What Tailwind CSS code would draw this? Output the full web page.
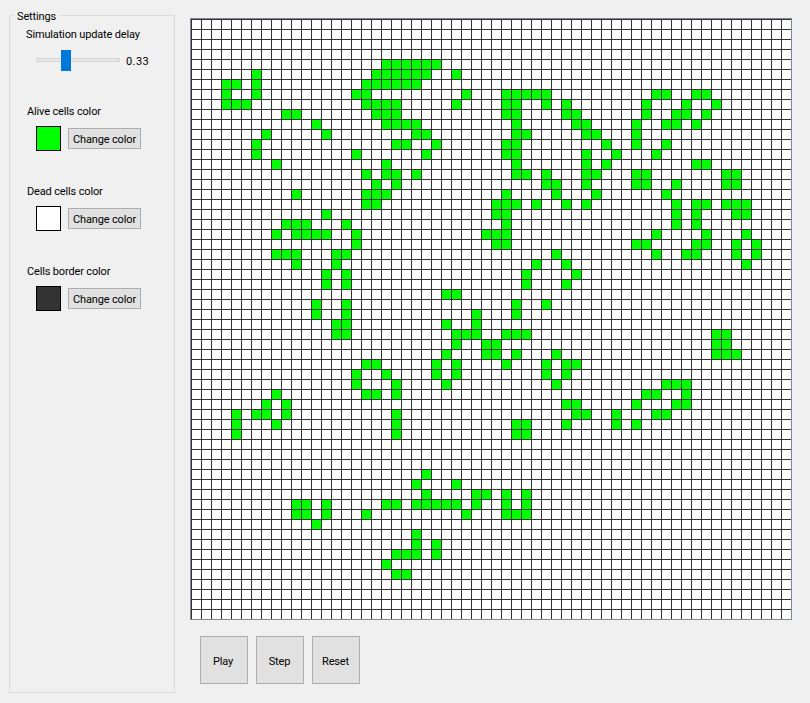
<!DOCTYPE html>
<html>
<head>
<meta charset="utf-8">
<title>Game of Life</title>
<script src="https://cdn.jsdelivr.net/npm/@tailwindcss/browser@4"></script>
</head>
<body class="m-0">
<div class="flex w-[810px] h-[703px] overflow-hidden bg-[#f0f0f0] text-[11px] tracking-[-0.15px] leading-[18px] text-[#000] font-['Roboto',sans-serif]">
  <!-- Settings group -->
  <div class="relative ml-[9px] mt-[15px] w-[166px] h-[678px] shrink-0 border border-[#dcdcdc] pl-[16px] pt-[10px]">
    <span class="absolute left-[3px] top-[-8px] bg-[#f0f0f0] px-[4px]">Settings</span>
    <div>Simulation update delay</div>
    <div class="flex items-center mt-[5px] ml-[10px] h-[21px]">
      <div class="relative w-[84px] h-[4px] bg-[#e7e7e7] border border-[#d6d6d6]">
        <div class="absolute left-[24px] top-[-9px] w-[10px] h-[21px] bg-[#0078d7]"></div>
      </div>
      <span class="ml-[6px] mt-[5px] tracking-[0.4px]">0.33</span>
    </div>

    <div class="mt-[33px] ml-[1px]">Alive cells color</div>
    <div class="flex items-center mt-[5px] ml-[10px] gap-[7px]">
      <div class="w-[25px] h-[25px] bg-[#00ff00] border border-black"></div>
      <button class="w-[73px] h-[21px] bg-[#e1e1e1] border border-[#adadad] pt-[2px] whitespace-nowrap">Change color</button>
    </div>

    <div class="mt-[32px] ml-[1px]">Dead cells color</div>
    <div class="flex items-center mt-[5px] ml-[10px] gap-[7px]">
      <div class="w-[25px] h-[25px] bg-white border border-black"></div>
      <button class="w-[73px] h-[21px] bg-[#e1e1e1] border border-[#adadad] pt-[2px] whitespace-nowrap">Change color</button>
    </div>

    <div class="mt-[32px] ml-[1px]">Cells border color</div>
    <div class="flex items-center mt-[5px] ml-[10px] gap-[7px]">
      <div class="w-[25px] h-[25px] bg-[#333333] border border-black"></div>
      <button class="w-[73px] h-[21px] bg-[#e1e1e1] border border-[#adadad] pt-[2px] whitespace-nowrap">Change color</button>
    </div>
  </div>

  <!-- Board and controls -->
  <div class="ml-[15px] mt-[18px] flex flex-col">
    <div class="w-[602px] h-[602px] border border-[#7f8a94] bg-white">
      <svg class="block" width="600" height="600" viewBox="0 0 600 600" shape-rendering="crispEdges">
        <defs>
          <pattern id="cells" width="10" height="10" patternUnits="userSpaceOnUse">
            <path d="M0 .5H10M.5 0V10" fill="none" stroke="#333333" stroke-width="1"/>
          </pattern>
        </defs>
        <g transform="scale(10)">
          <path fill="none" stroke="#00ff00" stroke-width="1" d="
            M19 4.5h6
            M6 5.5h1M18 5.5h6M26 5.5h1
            M3 6.5h2M6 6.5h1M17 6.5h6
            M3 7.5h1M6 7.5h1M16 7.5h2M27 7.5h1M31 7.5h5M46 7.5h2M50 7.5h2
            M3 8.5h3M17 8.5h4M26 8.5h1M31 8.5h2M35 8.5h1M37 8.5h1M45 8.5h1M49 8.5h1M52 8.5h1
            M9 9.5h2M18 9.5h3M31 9.5h2M37 9.5h2M45 9.5h1M48 9.5h2M51 9.5h1
            M12 10.5h1M19 10.5h4M32 10.5h1M38 10.5h2M44 10.5h1M47 10.5h2M50 10.5h1
            M7 11.5h1M13 11.5h1M22 11.5h2M32 11.5h2M39 11.5h2M44 11.5h1
            M6 12.5h1M20 12.5h2M24 12.5h1M31 12.5h2M41 12.5h1M44 12.5h1M47 12.5h1
            M6 13.5h1M16 13.5h1M23 13.5h1M31 13.5h2M39 13.5h1M42 13.5h1M46 13.5h1
            M8 14.5h1M19 14.5h1M32 14.5h1M39 14.5h1M41 14.5h1M50 14.5h2
            M17 15.5h1M19 15.5h2M22 15.5h1M32 15.5h2M35 15.5h1M39 15.5h2M44 15.5h2M53 15.5h2
            M18 16.5h1M20 16.5h1M35 16.5h2M39 16.5h1M44 16.5h2M48 16.5h1M53 16.5h2
            M10 17.5h1M17 17.5h3M31 17.5h1M36 17.5h1M40 17.5h1M47 17.5h1
            M17 18.5h2M30 18.5h3M34 18.5h1M37 18.5h1M39 18.5h1M48 18.5h1M50 18.5h2M53 18.5h3
            M13 19.5h1M30 19.5h2M48 19.5h1M50 19.5h1M54 19.5h2
            M9 20.5h3M15 20.5h1M31 20.5h1M48 20.5h1M50 20.5h1
            M8 21.5h1M10 21.5h4M16 21.5h1M29 21.5h3M46 21.5h1M51 21.5h1M55 21.5h1
            M16 22.5h1M30 22.5h2M44 22.5h2M50 22.5h2M54 22.5h1M56 22.5h1
            M8 23.5h3M14 23.5h2M36 23.5h1M46 23.5h1M49 23.5h2M54 23.5h1M56 23.5h1
            M10 24.5h1M14 24.5h1M34 24.5h1M37 24.5h1M55 24.5h1
            M13 25.5h1M15 25.5h1M33 25.5h1M38 25.5h1
            M13 26.5h1M15 26.5h1M33 26.5h1M37 26.5h1
            M25 27.5h2
            M12 28.5h1M15 28.5h1M32 28.5h1M35 28.5h1
            M12 29.5h1M15 29.5h1M28 29.5h1M32 29.5h1
            M14 30.5h2M25 30.5h1M28 30.5h1
            M14 31.5h2M26 31.5h3M31 31.5h3M52 31.5h2
            M26 32.5h1M29 32.5h2M52 32.5h2
            M25 33.5h1M29 33.5h2M32 33.5h1M36 33.5h1M52 33.5h3
            M17 34.5h2M24 34.5h1M26 34.5h1M31 34.5h1M35 34.5h1M37 34.5h2
            M16 35.5h1M19 35.5h1M24 35.5h1M26 35.5h1M35 35.5h1M37 35.5h1
            M16 36.5h1M20 36.5h1M25 36.5h1M36 36.5h1M47 36.5h3
            M8 37.5h1M17 37.5h2M20 37.5h1M45 37.5h2M49 37.5h1
            M7 38.5h1M9 38.5h1M37 38.5h2M44 38.5h1M48 38.5h2
            M4 39.5h1M6 39.5h2M9 39.5h1M20 39.5h1M38 39.5h2M42 39.5h1M46 39.5h2
            M4 40.5h1M8 40.5h1M20 40.5h1M32 40.5h2M37 40.5h1M42 40.5h1M44 40.5h1
            M4 41.5h1M20 41.5h1M32 41.5h2
            M23 45.5h1
            M22 46.5h1M26 46.5h1
            M23 47.5h1M28 47.5h2M31 47.5h1M33 47.5h1
            M10 48.5h2M13 48.5h1M19 48.5h2M22 48.5h5M28 48.5h1M31 48.5h1M33 48.5h1
            M10 49.5h2M13 49.5h1M17 49.5h1M27 49.5h1M31 49.5h3
            M12 50.5h1
            M22 51.5h1
            M22 52.5h1M24 52.5h1
            M20 53.5h3M24 53.5h1
            M19 54.5h1
            M20 55.5h2"/>
        </g>
        <rect width="600" height="600" fill="url(#cells)"/>
      </svg>
    </div>
    <div class="flex gap-[8px] ml-[10px] mt-[16px]">
      <button class="w-[48px] h-[48px] bg-[#e1e1e1] border border-[#adadad] pt-[3px] pr-[2px]">Play</button>
      <button class="w-[48px] h-[48px] bg-[#e1e1e1] border border-[#adadad] pt-[3px] pr-[1px]">Step</button>
      <button class="w-[48px] h-[48px] bg-[#e1e1e1] border border-[#adadad] pt-[3px] pr-[1px]">Reset</button>
    </div>
  </div>
</div>
</body>
</html>
